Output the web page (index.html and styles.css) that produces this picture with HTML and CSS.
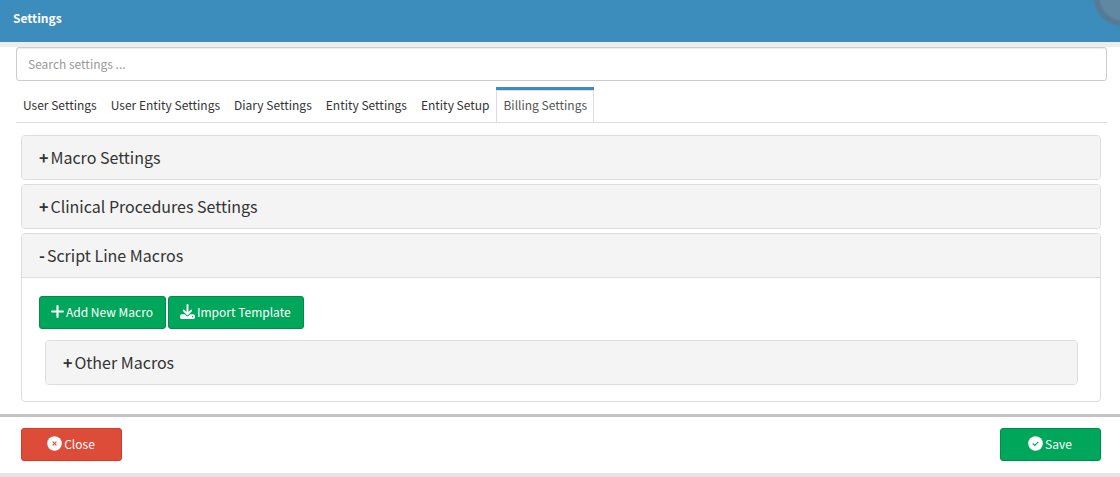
FILE: index.html
```html
<!DOCTYPE html>
<html lang="en">
<head>
    <meta charset="UTF-8">
    <meta name="viewport" content="width=device-width, initial-scale=1.0">
    <title>Settings</title>
    <link rel="stylesheet" href="styles.css">
</head>
<body>
    <header class="modal-header">
        <h1>Settings</h1>
        <span class="float-circle"></span>
    </header>

    <main class="modal-body">
        <input type="text" class="search" placeholder="Search settings ..." aria-label="Search settings">

        <nav>
            <ul class="tabs">
                <li><a href="#user">User Settings</a></li>
                <li><a href="#user-entity">User Entity Settings</a></li>
                <li><a href="#diary">Diary Settings</a></li>
                <li><a href="#entity">Entity Settings</a></li>
                <li><a href="#setup">Entity Setup</a></li>
                <li class="active"><a href="#billing">Billing Settings</a></li>
            </ul>
        </nav>

        <div class="panels" id="billing">
            <section class="panel">
                <h2><button type="button" class="panel-heading" aria-expanded="false"><b>+</b>Macro Settings</button></h2>
            </section>
            <section class="panel">
                <h2><button type="button" class="panel-heading" aria-expanded="false"><b>+</b>Clinical Procedures Settings</button></h2>
            </section>
            <section class="panel">
                <h2><button type="button" class="panel-heading open" aria-expanded="true"><b>-</b>Script Line Macros</button></h2>
                <div class="panel-body">
                    <div class="actions">
                        <button type="button" class="btn btn-success">
                            <svg class="icon-plus" viewBox="0 0 12 12"><path d="M6 1v10M1 6h10"/></svg>Add New Macro
                        </button>
                        <button type="button" class="btn btn-success">
                            <svg class="icon" viewBox="0 0 512 512"><path d="M288 32c0-17.700-14.300-32-32-32s-32 14.300-32 32v242.700l-73.400-73.400c-12.500-12.500-32.800-12.500-45.300 0s-12.500 32.800 0 45.300l128 128c12.500 12.500 32.800 12.500 45.300 0l128-128c12.500-12.500 12.500-32.800 0-45.300s-32.800-12.500-45.300 0L288 274.700V32zM64 352c-35.300 0-64 28.700-64 64v32c0 35.300 28.700 64 64 64h384c35.300 0 64-28.700 64-64v-32c0-35.300-28.700-64-64-64H346.500l-45.300 45.300c-25 25-65.500 25-90.500 0L165.500 352H64zm368 56a24 24 0 1 1 0 48 24 24 0 1 1 0-48z"/></svg>Import Template
                        </button>
                    </div>
                    <section class="panel nested">
                        <h2><button type="button" class="panel-heading" aria-expanded="false"><b>+</b>Other Macros</button></h2>
                    </section>
                </div>
            </section>
        </div>
    </main>

    <footer class="modal-footer">
        <button type="button" class="btn btn-wide btn-danger">
            <svg class="icon" viewBox="0 0 16 16"><circle cx="8" cy="8" r="7.800"/><path class="mark" d="M6 6l4 4M10 6l-4 4"/></svg>Close
        </button>
        <button type="button" class="btn btn-wide btn-success">
            <svg class="icon" viewBox="0 0 16 16"><circle cx="8" cy="8" r="7.800"/><path class="mark" d="M5 8l2.200 2L11 6.200"/></svg>Save
        </button>
    </footer>
</body>
</html>
```
FILE: styles.css
```css
* {
    box-sizing: border-box;
}
body {
    font-family: 'Source Sans Pro', 'Noto Sans CJK SC', sans-serif;
    font-size: 12px;
    line-height: 20px;
    color: #333;
    margin: 0;
    background-color: #fff;
}
h1, h2 {
    margin: 0;
    font-weight: normal;
}
button, input {
    font: inherit;
}
.modal-header {
    position: relative;
    overflow: hidden;
    background-color: #3c8dbc;
    border-bottom: 5px solid #ededed;
    padding: 8px 13px 14px;
    color: #fff;
}
.modal-header h1 {
    font-size: 12px;
    font-weight: bold;
}
.float-circle {
    position: absolute;
    top: -34px;
    right: -34px;
    width: 62px;
    height: 62px;
    border-radius: 50%;
    background: radial-gradient(circle closest-side, #6088a3 72%, #557a94 80%, #557a94 88%, #3c8dbc 100%);
}
.modal-body {
    padding: 0 13px 12px 16px;
}
.search {
    display: block;
    width: 100%;
    height: 34px;
    padding: 5px 11px 7px;
    border: 1px solid #ccc;
    border-radius: 3px;
    box-shadow: inset 0 1px 1px rgba(0, 0, 0, 0.075);
    color: #555;
}
.search::placeholder {
    color: #999;
}
.tabs {
    display: flex;
    gap: 1px;
    list-style: none;
    margin: 6px 0 0;
    padding: 0;
    border-bottom: 1px solid #ddd;
}
.tabs li {
    border-top: 3px solid transparent;
}
.tabs a {
    display: block;
    padding: 5px 6px 7px;
    border-left: 1px solid transparent;
    color: #333;
    text-decoration: none;
}
.tabs .active {
    border-top-color: #3c8dbc;
}
.tabs .active a {
    border: 1px solid #ddd;
    border-bottom: none;
    padding-top: 4px;
    color: #555;
}
.panels {
    display: flex;
    flex-direction: column;
    gap: 4px;
    padding: 12px 6px 0 5px;
}
.panel {
    border: 1px solid #ddd;
    border-radius: 4px;
    overflow: hidden;
}
.panel-heading {
    display: block;
    width: 100%;
    padding: 10px 17px 11px;
    border: none;
    background-color: #f4f4f4;
    color: #333;
    font-size: 16px;
    line-height: 22px;
    text-align: left;
    cursor: pointer;
}
.panel-heading b {
    margin-right: 2px;
}
.panel-heading.open {
    border-bottom: 1px solid #ddd;
}
.panel-body {
    padding: 18px 17px 16px;
}
.actions {
    display: flex;
    gap: 2px;
}
.nested {
    margin: 11px 5px 0 6px;
}
.btn {
    display: inline-flex;
    align-items: center;
    justify-content: center;
    gap: 2px;
    height: 33px;
    padding: 0 12px 2px 11px;
    border: 1px solid;
    border-radius: 3px;
    color: #fff;
    cursor: pointer;
}
.btn-wide {
    width: 101px;
}
.btn-success {
    background-color: #00a65a;
    border-color: #008d4c;
}
.btn-danger {
    background-color: #dd4b39;
    border-color: #d73925;
}
.icon {
    width: 15px;
    height: 15px;
    fill: #fff;
}
.icon-plus {
    width: 13px;
    height: 13px;
    fill: none;
    stroke: #fff;
    stroke-width: 2;
    stroke-linecap: round;
}
.mark {
    fill: none;
    stroke: #00a65a;
    stroke-width: 1.2;
}
.btn-danger .mark {
    stroke: #dd4b39;
}
.modal-footer {
    display: flex;
    justify-content: space-between;
    padding: 11px 19px 12px 21px;
    border-top: 3px solid #c3c3c3;
    border-bottom: 4px solid #e5e5e5;
}
```
